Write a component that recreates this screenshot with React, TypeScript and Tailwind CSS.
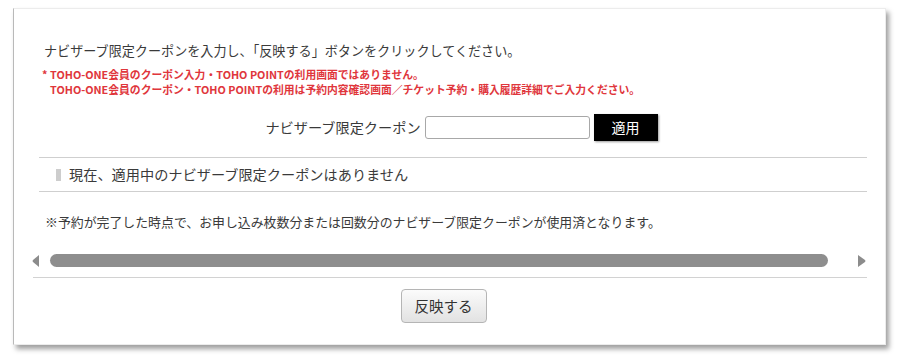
import React from 'react';

const font = '"Noto Sans CJK JP", "Noto Sans", sans-serif';

const App: React.FC = () => {
  return (
    <div className="w-[900px] h-[364px] bg-white pt-[8px] pl-[13px]" style={{ fontFamily: font }}>
      <div className="w-[873px] h-[337px] bg-white border border-[#ececec] border-l-[#b9b9b9] shadow-[3px_4px_5px_rgba(0,0,0,0.38)] px-[18px] pt-[33px]">
        {/* Intro */}
        <p className="pl-[12px] text-[13.1px] leading-[18px] text-[#3a3a3a]">
          ナビザーブ限定クーポンを入力し、「反映する」ボタンをクリックしてください。
        </p>

        {/* Notice */}
        <div className="mt-[7px] pl-[10px] flex text-[10.8px] leading-[15px] font-bold text-[#e0363c]">
          <span className="w-[8px] shrink-0">*</span>
          <div className="flex flex-col">
            <span>TOHO-ONE会員のクーポン入力・TOHO POINTの利用画面ではありません。</span>
            <span>TOHO-ONE会員のクーポン・TOHO POINTの利用は予約内容確認画面／チケット予約・購入履歴詳細でご入力ください。</span>
          </div>
        </div>

        {/* Coupon input */}
        <div className="mt-[17px] pl-[24px] flex items-center justify-center">
          <span className="text-[14.2px] text-[#3a3a3a] mr-[4px]">ナビザーブ限定クーポン</span>
          <input
            type="text"
            className="w-[165px] h-[23px] border border-[#a8a8a8] rounded-[3px] bg-white outline-none"
          />
          <button className="ml-[4px] w-[64px] h-[27px] bg-black text-white text-[14px] shadow-[1px_1px_2px_rgba(0,0,0,0.4)]">
            適用
          </button>
        </div>

        {/* Current coupon */}
        <div className="mt-[16px] ml-[7px] border-t border-b border-[#cfcfcf] h-[35px] flex items-center pl-[17px]">
          <span className="w-[5px] h-[12px] bg-[#cdcdcd] mr-[8px]" />
          <span className="text-[14.2px] text-[#3a3a3a]">現在、適用中のナビザーブ限定クーポンはありません</span>
        </div>

        {/* Note */}
        <p className="mt-[21px] pl-[13px] text-[12.9px] leading-[18px] text-[#3a3a3a]">
          ※予約が完了した時点で、お申し込み枚数分または回数分のナビザーブ限定クーポンが使用済となります。
        </p>

        {/* Scrollbar */}
        <div className="mt-[23px] flex items-center h-[13px]">
          <svg width="7" height="12" viewBox="0 0 7 12">
            <path d="M7 0 L7 12 L1 7 Q0 6 1 5 Z" fill="#8c8c8c" />
          </svg>
          <div className="ml-[11px] w-[778px] h-[13px] rounded-full bg-[#8e8e8e]" />
          <svg className="ml-auto mr-[1px]" width="8" height="12" viewBox="0 0 8 12">
            <path d="M0 0 L0 12 L7 7 Q8 6 7 5 Z" fill="#8c8c8c" />
          </svg>
        </div>

        {/* Submit */}
        <div className="mt-[10px] ml-[1px] border-t border-[#d2d2d2] pt-[11px] flex justify-center pr-[13px]">
          <button className="w-[86px] h-[34px] rounded-[4px] border border-[#b5b5b5] bg-gradient-to-b from-[#fbfbfb] to-[#e2e2e2] text-[14.5px] text-[#333]">
            反映する
          </button>
        </div>
      </div>
    </div>
  );
};

export default App;
